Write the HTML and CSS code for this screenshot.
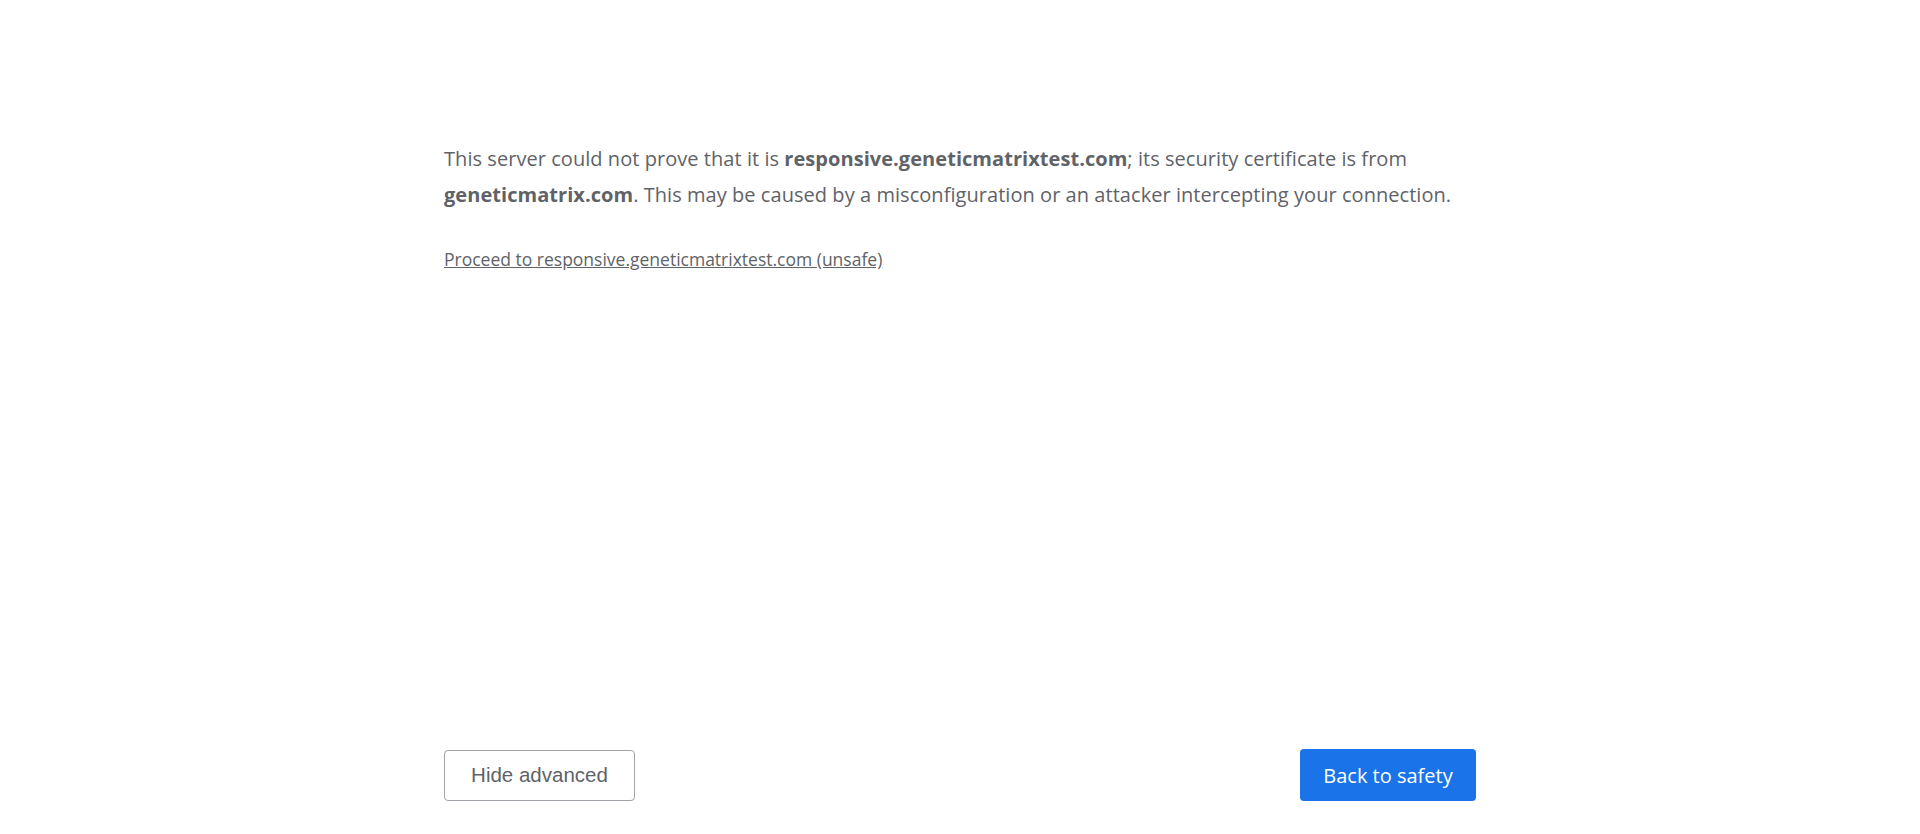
FILE: index.html
```html
<!DOCTYPE html>
<html lang="en">
<head>
<meta charset="utf-8">
<title>Privacy error</title>
<link rel="stylesheet" href="styles.css">
</head>
<body>
<div class="page">
  <div class="wrapper">
    <div class="details">
      <p class="explanation">This server could not prove that it is <strong>responsive.geneticmatrixtest.com</strong>; its security certificate is from <strong>geneticmatrix.com</strong>. This may be caused by a misconfiguration or an attacker intercepting your connection.</p>
      <p class="proceed"><a href="#" class="proceed-link">Proceed to responsive.geneticmatrixtest.com (unsafe)</a></p>
    </div>
    <div class="nav">
      <button class="btn btn-secondary">Hide advanced</button>
      <button class="btn btn-primary">Back to safety</button>
    </div>
  </div>
</div>
</body>
</html>
```
FILE: styles.css
```css
html, body {
  margin: 0;
  padding: 0;
  background: #ffffff;
}
.page {
  height: 834px;
  display: flex;
  justify-content: center;
}
.wrapper {
  width: 1032px;
  display: flex;
  flex-direction: column;
  justify-content: space-between;
  padding-top: 141px;
  padding-bottom: 33px;
  box-sizing: border-box;
}
.details {
  color: #5f6368;
  font-family: "Open Sans", "Noto Sans", sans-serif;
}
.explanation {
  margin: 0;
  font-size: 20px;
  line-height: 36px;
  letter-spacing: 0.05px;
}
.explanation strong {
  font-weight: 700;
}
.proceed {
  margin: 28px 0 0;
  font-size: 17.5px;
  line-height: 36px;
}
.proceed-link {
  color: #5f6368;
  text-decoration: underline;
}
.nav {
  display: flex;
  justify-content: space-between;
  align-items: center;
}
.btn {
  box-sizing: border-box;
  border-radius: 4px;
  height: 51px;
  cursor: pointer;
}
.btn-secondary {
  width: 191px;
  background: #ffffff;
  border: 1px solid #a0a3a8;
  color: #5f6368;
  font-family: "Liberation Sans", Arial, sans-serif;
  font-size: 20.5px;
}
.btn-primary {
  width: 176px;
  height: 52px;
  background: #1a73e8;
  border: none;
  color: #ffffff;
  font-family: "Open Sans", "Noto Sans", sans-serif;
  font-size: 20px;
}
```
